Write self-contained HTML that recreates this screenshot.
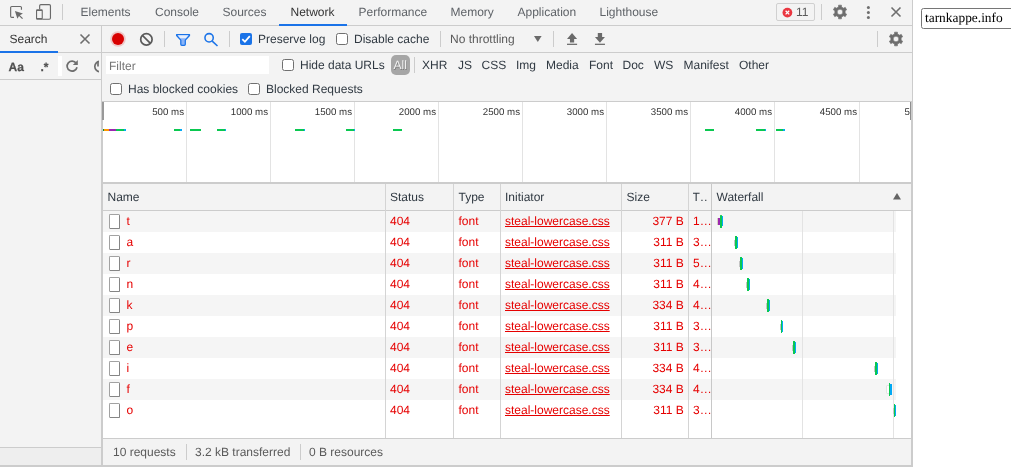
<!DOCTYPE html>
<html><head><meta charset="utf-8">
<style>
*{box-sizing:border-box;margin:0;padding:0}
html,body{width:1011px;height:467px;overflow:hidden;background:#fff}
body{font-family:"Liberation Sans",Arial,sans-serif;font-size:12px;color:#303942;position:relative;text-rendering:geometricPrecision}
.a{position:absolute}
.t{position:absolute;white-space:nowrap;line-height:14px;height:14px}
.tab{position:absolute;top:5px;line-height:14px;color:#5f6368;white-space:nowrap}
.vs{position:absolute;width:1px;background:#ccc}
.hs{position:absolute;height:1px;background:#ccc}
.cb{position:absolute;width:12px;height:12px;border:1px solid #707070;border-radius:2.5px;background:#fff}
.row{position:absolute;left:103px;width:793px;height:21px}
.row.g{background:#f5f5f5}
.c{position:absolute;line-height:14px;top:3px;color:#e60000;white-space:nowrap}
.fi{position:absolute;left:5.8px;top:3.5px;width:11.7px;height:15px;border:1px solid #a2a2a2;border-right-color:#858585;border-bottom-color:#858585;border-radius:1.5px;background:#fff}
.tk{position:absolute;top:106.800px;font-size:9.700px;line-height:12px;color:#333;white-space:nowrap;text-align:right;width:60px}
.gl{position:absolute;top:102px;width:1px;height:80px;background:#e3e3e3}
.ob{position:absolute;top:129px;height:2px}
svg{position:absolute;overflow:visible}
</style></head><body><div id="root" style="position:absolute;left:0;top:0;width:1011px;height:467px;will-change:transform">
<div class="a" style="left:0;top:0;width:913px;height:467px;background:#f3f3f3"></div>

<div class="tab" style="left:80.5px;color:#5f6368">Elements</div>
<div class="tab" style="left:155px;color:#5f6368">Console</div>
<div class="tab" style="left:222.5px;color:#5f6368">Sources</div>
<div class="tab" style="left:290.5px;color:#333">Network</div>
<div class="tab" style="left:358.5px;color:#5f6368">Performance</div>
<div class="tab" style="left:450.5px;color:#5f6368">Memory</div>
<div class="tab" style="left:517.5px;color:#5f6368">Application</div>
<div class="tab" style="left:599.5px;color:#5f6368">Lighthouse</div>
<div class="hs" style="left:0;top:25px;width:912px"></div>
<div class="a" style="left:279px;top:24px;width:68px;height:2px;background:#1a73e8"></div>
<div class="vs" style="left:62px;top:4px;height:16px"></div>
<!-- inspect icon -->
<svg style="left:0;top:0" width="80" height="26" viewBox="0 0 80 26" fill="none" stroke="#6a6a6a" stroke-width="1.150">
 <path d="M21.450 9.800V7.600a1.100 1.100 0 0 0-1.100-1.100h-8.600a1.100 1.100 0 0 0-1.100 1.100v8.600a1.100 1.100 0 0 0 1.100 1.100H14"/>
 <path d="M14.900 11L22.900 13.600L19.900 15.200L23 18.200L22.100 19.100L19 16.100L17.400 18.700Z" fill="#6a6a6a" stroke="none"/>
 <rect x="39.650" y="4.550" width="10.800" height="14.700" rx="1.200" />
 <rect x="36" y="9.200" width="6.800" height="10.600" rx="1.200" fill="#f3f3f3" stroke="none"/>
 <path fill-rule="evenodd" fill="#6a6a6a" stroke="none" d="M37.200 9.200h4.400a1.200 1.200 0 0 1 1.200 1.200v8.200a1.200 1.200 0 0 1-1.200 1.200h-4.400a1.200 1.200 0 0 1-1.200-1.200v-8.200a1.200 1.200 0 0 1 1.200-1.200zM37.100 11.100v7h4.600v-7z"/>
</svg>
<!-- error badge -->
<div class="a" style="left:776px;top:3px;width:39px;height:18px;border:1px solid #d0d0d0;border-radius:2px"></div>
<svg style="left:782px;top:7px" width="11" height="11" viewBox="0 0 11 11"><circle cx="5.400" cy="5.600" r="4.900" fill="#ea3640"/><path d="M3.600 3.800l3.600 3.600M7.200 3.800l-3.600 3.600" stroke="#fff" stroke-width="1.300"/></svg>
<div class="t" style="left:796px;top:5px;color:#5a5a5a">11</div>
<div class="vs" style="left:821px;top:4px;height:16px"></div>
<svg style="left:832px;top:3.9000000000000004px" width="16" height="16" viewBox="-8 -8 16 16"><path fill="#6e6e6e" stroke="#6e6e6e" stroke-width="0.600" stroke-linejoin="round" fill-rule="evenodd" d="M1.48 -5.09L1.46 -6.85L-1.46 -6.85L-1.48 -5.09L-3.67 -3.83L-5.20 -4.68L-6.66 -2.16L-5.15 -1.26L-5.15 1.26L-6.66 2.16L-5.20 4.68L-3.67 3.83L-1.48 5.09L-1.46 6.85L1.46 6.85L1.48 5.09L3.67 3.83L5.20 4.68L6.66 2.16L5.15 1.26L5.15 -1.26L6.66 -2.16L5.20 -4.68L3.67 -3.83ZM-2.80 0.00a2.8 2.8 0 1 0 5.6 0a2.8 2.8 0 1 0 -5.6 0Z"/></svg>
<svg style="left:866px;top:5px" width="5" height="15" viewBox="0 0 5 15" fill="#6e6e6e"><circle cx="2.400" cy="2.500" r="1.500"/><circle cx="2.400" cy="7.500" r="1.500"/><circle cx="2.400" cy="12.400" r="1.500"/></svg>
<svg style="left:891px;top:7px" width="10" height="10" viewBox="0 0 10 10" stroke="#6e6e6e" stroke-width="1.600"><path d="M0.500 0.500l9 9M9.500 0.500l-9 9"/></svg>


<div class="vs" style="left:101px;top:26px;height:75px;width:1px"></div><div class="vs" style="left:101.300px;top:101px;height:364px;width:1.500px"></div>
<div class="t" style="left:9.500px;top:32px;color:#333">Search</div>
<svg style="left:80px;top:34px" width="10" height="10" viewBox="0 0 10 10" stroke="#6e6e6e" stroke-width="1.600"><path d="M0.500 0.500l9 9M9.500 0.500l-9 9"/></svg>
<div class="hs" style="left:0;top:52px;width:912px"></div>
<div class="a" style="left:0;top:51px;width:58px;height:2px;background:#1a73e8"></div>
<div class="a" style="left:58px;top:56px;width:4px;height:20px;background:#fff"></div>
<div class="t" style="left:8.500px;top:59.700px;color:#505050;font-weight:bold;-webkit-text-stroke:0.250px #505050">Aa</div>
<div class="t" style="left:40.500px;top:59.700px;color:#505050;font-weight:bold;-webkit-text-stroke:0.250px #505050">.*</div>
<svg style="left:65px;top:59px" width="14" height="14" viewBox="0 0 14 14" fill="none" stroke="#6e6e6e" stroke-width="1.700"><path d="M11.200 4.200A5 5 0 1 0 12 8.200"/><path d="M12.800 1v5h-5z" fill="#6e6e6e" stroke="none"/></svg>
<svg style="left:93px;top:59px;overflow:hidden" width="6" height="14" viewBox="0 0 6 14" fill="none" stroke="#6e6e6e" stroke-width="1.700"><circle cx="7" cy="7.500" r="5.200"/><path d="M5 2.500v5" /></svg>
<div class="hs" style="left:0;top:79px;width:101px"></div>
<div class="a" style="left:0;top:448px;width:101px;height:17px;background:#eee"></div>
<div class="hs" style="left:0;top:447px;width:101px"></div>


<svg style="left:108px;top:29px" width="20" height="20" viewBox="0 0 20 20"><circle cx="10" cy="10" r="7.800" fill="#d80000" opacity="0.180"/><circle cx="10" cy="10" r="6" fill="#d80000"/></svg>
<svg style="left:139px;top:32px" width="15" height="15" viewBox="0 0 15 15" fill="none" stroke="#5a5a5a" stroke-width="1.700"><circle cx="7.400" cy="7.400" r="5.700"/><path d="M3.400 3.400l8 8"/></svg>
<div class="vs" style="left:164px;top:31px;height:16px"></div>
<svg style="left:170px;top:28px" width="30" height="24" viewBox="170 28 30 24"><path d="M176.600 34.500H189.500V35.500L185.300 40.200V44.300a1 1 0 0 1-1 1H181.800a1 1 0 0 1-1-1V40.200L176.600 35.500Z" fill="#8ab4f8" stroke="#1a73e8" stroke-width="1.250" stroke-linejoin="round"/><path d="M177.700 35.300H188.400L185.800 38.300H180.300Z" fill="#e6eefd"/></svg>
<svg style="left:200px;top:28px" width="24" height="24" viewBox="200 28 24 24" fill="none" stroke="#1a73e8" stroke-width="1.550"><circle cx="209.100" cy="37.800" r="4.150"/><path d="M212.200 41.100L217.500 46"/></svg>
<div class="vs" style="left:229px;top:31px;height:16px"></div>
<div class="a" style="left:240px;top:33px;width:12px;height:12px;border-radius:2px;background:#1a73e8"></div>
<svg style="left:240px;top:33px" width="12" height="12" viewBox="0 0 12 12" fill="none" stroke="#fff" stroke-width="1.800"><path d="M2.300 6.200l2.600 2.600l4.900-5.600"/></svg>
<div class="t" style="left:258px;top:32px">Preserve log</div>
<div class="cb" style="left:336px;top:33px"></div>
<div class="t" style="left:354px;top:32px">Disable cache</div>
<div class="vs" style="left:439.500px;top:31px;height:16px"></div>
<div class="t" style="left:450px;top:32px;color:#5a5a5a">No throttling</div>
<svg style="left:533.700px;top:35.900px" width="7.600" height="6" viewBox="0 0 7.600 6"><path d="M0 0h7.600L3.800 6z" fill="#6a6a6a"/></svg>
<div class="vs" style="left:553px;top:31px;height:16px"></div>
<svg style="left:560px;top:28px" width="24" height="24" viewBox="560 28 24 24" fill="#6a6a6a"><path d="M572.050 33L567 38.900h2.950v3.700h4.200v-3.700h2.950z"/><rect x="567" y="43.700" width="10.100" height="1.250"/></svg>
<svg style="left:588px;top:28px" width="24" height="24" viewBox="588 28 24 24" fill="#6a6a6a"><path d="M599.950 42.700L594.950 37.100h2.850v-4.200h4.300v4.200h2.850z"/><rect x="594.950" y="43.700" width="10" height="1.250"/></svg>
<div class="vs" style="left:877px;top:31px;height:16px"></div>
<svg style="left:888px;top:31px" width="16" height="16" viewBox="-8 -8 16 16"><path fill="#6e6e6e" stroke="#6e6e6e" stroke-width="0.600" stroke-linejoin="round" fill-rule="evenodd" d="M1.48 -5.09L1.46 -6.85L-1.46 -6.85L-1.48 -5.09L-3.67 -3.83L-5.20 -4.68L-6.66 -2.16L-5.15 -1.26L-5.15 1.26L-6.66 2.16L-5.20 4.68L-3.67 3.83L-1.48 5.09L-1.46 6.85L1.46 6.85L1.48 5.09L3.67 3.83L5.20 4.68L6.66 2.16L5.15 1.26L5.15 -1.26L6.66 -2.16L5.20 -4.68L3.67 -3.83ZM-2.80 0.00a2.8 2.8 0 1 0 5.6 0a2.8 2.8 0 1 0 -5.6 0Z"/></svg>


<div class="a" style="left:106px;top:56px;width:163px;height:18px;background:#fff"></div>
<div class="t" style="left:109px;top:59px;color:#757575">Filter</div>
<div class="cb" style="left:282px;top:59px"></div>
<div class="t" style="left:300px;top:58px">Hide data URLs</div>
<div class="a" style="left:391px;top:55px;width:19px;height:19.500px;border-radius:5px;background:#a6a6a6"></div>
<div class="t" style="left:393.500px;top:58px;color:#f4f4f4;text-shadow:0.500px 0.700px 0 rgba(0,0,0,0.300)">All</div>
<div class="vs" style="left:414px;top:57px;height:16px"></div>

<div class="t" style="left:422px;top:58px">XHR</div>
<div class="t" style="left:458px;top:58px">JS</div>
<div class="t" style="left:481.5px;top:58px">CSS</div>
<div class="t" style="left:516px;top:58px">Img</div>
<div class="t" style="left:546px;top:58px">Media</div>
<div class="t" style="left:589px;top:58px">Font</div>
<div class="t" style="left:622.5px;top:58px">Doc</div>
<div class="t" style="left:654px;top:58px">WS</div>
<div class="t" style="left:683.5px;top:58px">Manifest</div>
<div class="t" style="left:739px;top:58px">Other</div>

<div class="cb" style="left:110px;top:83px"></div>
<div class="t" style="left:128px;top:82px">Has blocked cookies</div>
<div class="cb" style="left:248px;top:83px"></div>
<div class="t" style="left:266px;top:82px">Blocked Requests</div>


<div class="a" style="left:102.500px;top:101px;width:808.500px;height:82px;background:#fff;border-top:1px solid #ccc"></div>

<div class="gl" style="left:186px"></div><div class="tk" style="left:124px">500 ms</div>
<div class="gl" style="left:270px"></div><div class="tk" style="left:208px">1000 ms</div>
<div class="gl" style="left:354px"></div><div class="tk" style="left:292px">1500 ms</div>
<div class="gl" style="left:438px"></div><div class="tk" style="left:376px">2000 ms</div>
<div class="gl" style="left:522px"></div><div class="tk" style="left:460px">2500 ms</div>
<div class="gl" style="left:606px"></div><div class="tk" style="left:544px">3000 ms</div>
<div class="gl" style="left:690px"></div><div class="tk" style="left:628px">3500 ms</div>
<div class="gl" style="left:774px"></div><div class="tk" style="left:712px">4000 ms</div>
<div class="gl" style="left:859px"></div><div class="tk" style="left:797px">4500 ms</div>
<div class="tk" style="left:904.500px;width:auto;text-align:left;overflow:hidden;width:5px">5000 ms</div>
<div class="a" style="left:102px;top:102px;width:2px;height:18px;background:#999"></div>
<div class="a" style="left:910px;top:102px;width:2px;height:18px;background:#8e8e8e"></div>
<div class="ob" style="left:103px;width:1px;background:#0a8a3a"></div>
<div class="ob" style="left:104px;width:5px;background:#ff9800"></div>
<div class="ob" style="left:109px;width:7.299999999999997px;background:#9c27b0"></div>
<div class="ob" style="left:116.3px;width:7.700000000000003px;background:#0ac850"></div>
<div class="ob" style="left:124px;width:2px;background:#03a9f4"></div>
<div class="ob" style="left:173.5px;width:6.5px;background:#0ac850"></div>
<div class="ob" style="left:180px;width:1.5px;background:#03a9f4"></div>
<div class="ob" style="left:190px;width:11px;background:#0ac850"></div>
<div class="ob" style="left:217px;width:8px;background:#0ac850"></div>
<div class="ob" style="left:225px;width:0.8000000000000114px;background:#03a9f4"></div>
<div class="ob" style="left:295px;width:8.5px;background:#0ac850"></div>
<div class="ob" style="left:303.5px;width:1.0px;background:#03a9f4"></div>
<div class="ob" style="left:345.5px;width:8.0px;background:#0ac850"></div>
<div class="ob" style="left:353.5px;width:0.6999999999999886px;background:#03a9f4"></div>
<div class="ob" style="left:393px;width:8.5px;background:#0ac850"></div>
<div class="ob" style="left:705px;width:8.5px;background:#0ac850"></div>
<div class="ob" style="left:756px;width:8.5px;background:#0ac850"></div>
<div class="ob" style="left:764.5px;width:1.5px;background:#03a9f4"></div>
<div class="ob" style="left:776px;width:7px;background:#0ac850"></div>
<div class="ob" style="left:783px;width:1.5px;background:#03a9f4"></div>

<div class="a" style="left:102.500px;top:182px;width:808.500px;height:2px;background:#ccc"></div>
<div class="a" style="left:102.500px;top:183.500px;width:808.500px;height:27px;background:#f3f3f3"></div>
<div class="a" style="left:102.500px;top:210px;width:808.500px;height:228px;background:#fff"></div>
<div class="hs" style="left:102.500px;top:210px;width:808.500px"></div>

<div class="t" style="left:107.5px;top:190px">Name</div>
<div class="t" style="left:390px;top:190px">Status</div>
<div class="t" style="left:458.5px;top:190px">Type</div>
<div class="t" style="left:505px;top:190px">Initiator</div>
<div class="t" style="left:626.5px;top:190px">Size</div>
<div class="t" style="left:692.5px;top:190px;width:14.500px;overflow:hidden">T…</div>
<div class="t" style="left:716.5px;top:190px">Waterfall</div>
<svg style="left:893.100px;top:193.400px" width="8" height="6.600" viewBox="0 0 8 6.600"><path d="M0 6.600h8L4 0z" fill="#646464"/></svg>
<div class="row g" style="top:210.5px"><div class="fi"></div><div class="c" style="left:23.500px">t</div><div class="c" style="left:287px">404</div><div class="c" style="left:355.500px">font</div><div class="c" style="left:402px;text-decoration:underline">steal-lowercase.css</div><div class="c" style="left:500.800px;width:80px;text-align:right">377 B</div><div class="c" style="left:590px">1…</div></div>
<div class="row" style="top:231.5px"><div class="fi"></div><div class="c" style="left:23.500px">a</div><div class="c" style="left:287px">404</div><div class="c" style="left:355.500px">font</div><div class="c" style="left:402px;text-decoration:underline">steal-lowercase.css</div><div class="c" style="left:500.800px;width:80px;text-align:right">311 B</div><div class="c" style="left:590px">3…</div></div>
<div class="row g" style="top:252.5px"><div class="fi"></div><div class="c" style="left:23.500px">r</div><div class="c" style="left:287px">404</div><div class="c" style="left:355.500px">font</div><div class="c" style="left:402px;text-decoration:underline">steal-lowercase.css</div><div class="c" style="left:500.800px;width:80px;text-align:right">311 B</div><div class="c" style="left:590px">5…</div></div>
<div class="row" style="top:273.5px"><div class="fi"></div><div class="c" style="left:23.500px">n</div><div class="c" style="left:287px">404</div><div class="c" style="left:355.500px">font</div><div class="c" style="left:402px;text-decoration:underline">steal-lowercase.css</div><div class="c" style="left:500.800px;width:80px;text-align:right">311 B</div><div class="c" style="left:590px">4…</div></div>
<div class="row g" style="top:294.5px"><div class="fi"></div><div class="c" style="left:23.500px">k</div><div class="c" style="left:287px">404</div><div class="c" style="left:355.500px">font</div><div class="c" style="left:402px;text-decoration:underline">steal-lowercase.css</div><div class="c" style="left:500.800px;width:80px;text-align:right">334 B</div><div class="c" style="left:590px">4…</div></div>
<div class="row" style="top:315.5px"><div class="fi"></div><div class="c" style="left:23.500px">p</div><div class="c" style="left:287px">404</div><div class="c" style="left:355.500px">font</div><div class="c" style="left:402px;text-decoration:underline">steal-lowercase.css</div><div class="c" style="left:500.800px;width:80px;text-align:right">311 B</div><div class="c" style="left:590px">3…</div></div>
<div class="row g" style="top:336.5px"><div class="fi"></div><div class="c" style="left:23.500px">e</div><div class="c" style="left:287px">404</div><div class="c" style="left:355.500px">font</div><div class="c" style="left:402px;text-decoration:underline">steal-lowercase.css</div><div class="c" style="left:500.800px;width:80px;text-align:right">311 B</div><div class="c" style="left:590px">3…</div></div>
<div class="row" style="top:357.5px"><div class="fi"></div><div class="c" style="left:23.500px">i</div><div class="c" style="left:287px">404</div><div class="c" style="left:355.500px">font</div><div class="c" style="left:402px;text-decoration:underline">steal-lowercase.css</div><div class="c" style="left:500.800px;width:80px;text-align:right">334 B</div><div class="c" style="left:590px">4…</div></div>
<div class="row g" style="top:378.5px"><div class="fi"></div><div class="c" style="left:23.500px">f</div><div class="c" style="left:287px">404</div><div class="c" style="left:355.500px">font</div><div class="c" style="left:402px;text-decoration:underline">steal-lowercase.css</div><div class="c" style="left:500.800px;width:80px;text-align:right">334 B</div><div class="c" style="left:590px">4…</div></div>
<div class="row" style="top:399.5px"><div class="fi"></div><div class="c" style="left:23.500px">o</div><div class="c" style="left:287px">404</div><div class="c" style="left:355.500px">font</div><div class="c" style="left:402px;text-decoration:underline">steal-lowercase.css</div><div class="c" style="left:500.800px;width:80px;text-align:right">311 B</div><div class="c" style="left:590px">3…</div></div>
<div class="vs" style="left:385px;top:184px;height:254px;background:#d4d4d4"></div>
<div class="vs" style="left:453px;top:184px;height:254px;background:#d4d4d4"></div>
<div class="vs" style="left:500px;top:184px;height:254px;background:#d4d4d4"></div>
<div class="vs" style="left:621px;top:184px;height:254px;background:#d4d4d4"></div>
<div class="vs" style="left:688px;top:184px;height:254px;background:#d4d4d4"></div>
<div class="a" style="left:711px;top:184px;width:1.300px;height:254px;background:#c8c8c8"></div>
<div class="vs" style="left:802px;top:211px;height:227px;background:#e3e3e3"></div>
<div class="vs" style="left:893px;top:211px;height:227px;background:#e3e3e3"></div>
<div class="a" style="left:716.500px;top:218.0px;width:1.500px;height:7px;background:#d8cfc0"></div><div class="a" style="left:717.800px;top:218.0px;width:2.400px;height:7px;background:#9c27b0"></div><div class="a" style="left:720.200px;top:215.0px;width:2px;height:13px;background:#0ac850;border-radius:0.500px"></div><div class="a" style="left:722.200px;top:216.0px;width:0.900px;height:9.500px;background:#03a9f4"></div>
<div class="a" style="left:734.2px;top:239.5px;width:0.800px;height:6px;background:#c4c4c4"></div>
<div class="a" style="left:735px;top:236.0px;width:2.1000000000000227px;height:13px;background:#0ac850"></div><div class="a" style="left:737.1px;top:236.7px;width:1.1000000000000227px;height:11.500px;background:#03a9f4"></div>
<div class="a" style="left:739.2px;top:260.5px;width:0.800px;height:6px;background:#c4c4c4"></div>
<div class="a" style="left:740px;top:257.0px;width:2px;height:13px;background:#0ac850"></div><div class="a" style="left:742px;top:257.7px;width:1px;height:11.500px;background:#03a9f4"></div>
<div class="a" style="left:746.2px;top:281.5px;width:0.800px;height:6px;background:#c4c4c4"></div>
<div class="a" style="left:747px;top:278.0px;width:2px;height:13px;background:#0ac850"></div><div class="a" style="left:749px;top:278.7px;width:1px;height:11.500px;background:#03a9f4"></div>
<div class="a" style="left:766.2px;top:302.5px;width:0.800px;height:6px;background:#c4c4c4"></div>
<div class="a" style="left:767px;top:299.0px;width:2px;height:13px;background:#0ac850"></div><div class="a" style="left:769px;top:299.7px;width:1px;height:11.500px;background:#03a9f4"></div>
<div class="a" style="left:779.7px;top:323.5px;width:0.800px;height:6px;background:#c4c4c4"></div>
<div class="a" style="left:780.5px;top:320.0px;width:1.5px;height:13px;background:#0ac850"></div><div class="a" style="left:782px;top:320.7px;width:1px;height:11.500px;background:#03a9f4"></div>
<div class="a" style="left:791.8000000000001px;top:344.5px;width:0.800px;height:6px;background:#c4c4c4"></div>
<div class="a" style="left:792.6px;top:341.0px;width:2.0px;height:13px;background:#0ac850"></div><div class="a" style="left:794.6px;top:341.7px;width:1.0px;height:11.500px;background:#03a9f4"></div>
<div class="a" style="left:874.3000000000001px;top:365.5px;width:0.800px;height:6px;background:#c4c4c4"></div>
<div class="a" style="left:875.1px;top:362.0px;width:1.6999999999999318px;height:13px;background:#0ac850"></div><div class="a" style="left:876.8px;top:362.7px;width:1.2000000000000455px;height:11.500px;background:#03a9f4"></div>
<div class="a" style="left:887px;top:386.0px;width:1.800px;height:7px;background:#fdfdfd;box-shadow:0 0 0 0.400px #c8c8c8"></div>
<div class="a" style="left:888.8px;top:383.0px;width:1.2000000000000455px;height:13px;background:#0ac850"></div><div class="a" style="left:890px;top:383.7px;width:2px;height:11.500px;background:#03a9f4"></div>
<div class="a" style="left:893.2px;top:407.5px;width:0.800px;height:6px;background:#c4c4c4"></div>
<div class="a" style="left:894px;top:404.0px;width:1.2999999999999545px;height:13px;background:#0ac850"></div><div class="a" style="left:895.3px;top:404.7px;width:0.7000000000000455px;height:11.500px;background:#03a9f4"></div>

<div class="a" style="left:102.500px;top:438px;width:808.500px;height:27px;background:#f3f3f3;border-top:1px solid #ccc"></div>
<div class="t" style="left:113px;top:445px;color:#5a5a5a">10 requests</div>
<div class="vs" style="left:185.500px;top:444px;height:16px"></div>
<div class="t" style="left:195px;top:445px;color:#5a5a5a">3.2 kB transferred</div>
<div class="vs" style="left:299.500px;top:444px;height:16px"></div>
<div class="t" style="left:309px;top:445px;color:#5a5a5a">0 B resources</div>
<div class="a" style="left:912px;top:0;width:1px;height:101px;background:#ccc"></div><div class="a" style="left:911px;top:101px;width:2px;height:366px;background:#ccc"></div>
<div class="a" style="left:0;top:465px;width:913px;height:2px;background:#ccc"></div>
<div class="a" style="left:921px;top:7.500px;width:150px;height:21px;border:1px solid #767676;border-radius:2.500px;font-family:'Liberation Serif',serif;font-size:13.400px;line-height:17.500px;padding:0 2px 0 3px;color:#000;background:#fff;white-space:nowrap;overflow:hidden">tarnkappe.info</div>
</div></body></html>
